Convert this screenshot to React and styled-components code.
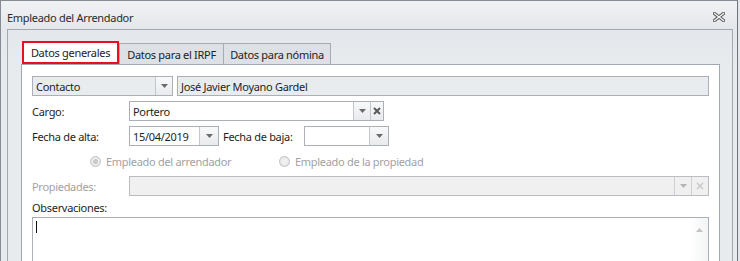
import React from 'react';
import styled, { createGlobalStyle } from 'styled-components';

const GlobalStyle = createGlobalStyle`
  html, body {
    margin: 0;
    padding: 0;
    overflow: hidden;
    background: #e3e6ea;
  }
  body {
    font-family: 'Noto Sans', 'Open Sans', sans-serif;
    font-size: 11px;
    letter-spacing: -0.3px;
    color: #1e1e1e;
  }
`;

const Window = styled.div`
  width: 738px;
  height: 320px;
  box-sizing: border-box;
  border: 1px solid #868c94;
  border-right-color: #6f757d;
  background: linear-gradient(#f1f2f4 0px, #e4e7eb 28px, #e8ebee 60px);
  display: flex;
  flex-direction: column;
`;

const TitleBar = styled.div`
  height: 28px;
  display: flex;
  align-items: center;
  justify-content: space-between;
  padding: 4px 12px 0 6px;
  box-sizing: border-box;
`;

const Title = styled.span`
  color: #2b2b2b;
`;

const GroupBox = styled.div`
  flex: 1;
  margin: 0 4px 0 6px;
  border: 1px solid #a2a8af;
  padding: 11px 12px 0 13px;
  display: flex;
  flex-direction: column;
`;

const TabStrip = styled.div`
  display: flex;
  align-items: flex-end;
  height: 23px;
  padding-left: 1px;
`;

const Tab = styled.div`
  box-sizing: border-box;
  height: ${({ active }) => (active ? '23px' : '21px')};
  width: ${({ w }) => w}px;
  display: flex;
  align-items: center;
  justify-content: center;
  background: ${({ active }) => (active ? '#ffffff' : '#dde0e4')};
  border: ${({ active }) => (active ? '2px solid #e8101a' : '1px solid #a5abb2')};
  border-bottom: ${({ active }) => (active ? '2px solid #e8101a' : 'none')};
  margin-left: ${({ active }) => (active ? '0' : '-1px')};
  padding-top: ${({ active }) => (active ? '0' : '1px')};
  color: #222;
  &:nth-child(2) {
    margin-left: 0;
  }
`;

const Panel = styled.div`
  flex: 1;
  background: #ffffff;
  border: 1px solid #a2a8af;
  border-bottom: none;
  padding: 11px 10px 0 10px;
  display: flex;
  flex-direction: column;
  gap: 5px;
`;

const Row = styled.div`
  display: flex;
  align-items: center;
  height: 20px;
  gap: ${({ gap }) => gap || 0}px;
`;

const Label = styled.div`
  width: ${({ w }) => w || 97}px;
  margin-left: ${({ ml }) => ml || 0}px;
  flex: none;
  color: ${({ disabled }) => (disabled ? '#a2a2a2' : '#1e1e1e')};
`;

const Field = styled.div`
  box-sizing: border-box;
  height: 20px;
  width: ${({ w }) => (w ? `${w}px` : 'auto')};
  flex: ${({ w }) => (w ? 'none' : '1')};
  display: flex;
  align-items: stretch;
  border: 1px solid ${({ disabled }) => (disabled ? '#b9bdc2' : '#abb0b6')};
  background: ${({ bg }) => bg || '#ffffff'};
`;

const Value = styled.div`
  flex: 1;
  display: flex;
  align-items: center;
  padding-left: ${({ pl }) => pl || 3}px;
  white-space: nowrap;
  overflow: hidden;
`;

const SideButton = styled.div`
  width: ${({ w }) => w || 16}px;
  flex: none;
  display: flex;
  align-items: center;
  justify-content: center;
  border-left: 1px solid ${({ disabled }) => (disabled ? '#cdd0d4' : '#c3c7cc')};
  background: ${({ disabled }) =>
    disabled ? '#f0f0f0' : 'linear-gradient(#f8f9fa, #e8eaed)'};
`;

const RadioRow = styled(Row)`
  padding-left: 58px;
`;

const RadioItem = styled.div`
  display: flex;
  align-items: center;
  gap: 5px;
  width: ${({ w }) => (w ? `${w}px` : 'auto')};
  color: #a2a2a2;
`;

const RadioDot = styled.span`
  box-sizing: border-box;
  width: 11px;
  height: 11px;
  border-radius: 50%;
  border: 1px solid #bfc2c6;
  background: radial-gradient(circle, #f4f4f4 0%, #e2e2e2 100%);
  display: flex;
  align-items: center;
  justify-content: center;
  &::after {
    content: '';
    width: 5px;
    height: 5px;
    border-radius: 50%;
    background: ${({ checked }) => (checked ? '#c9c9c9' : 'transparent')};
  }
`;

const TextLabel = styled.div`
  height: 14px;
  display: flex;
  align-items: center;
  margin-top: -1px;
`;

const Memo = styled.div`
  flex: 1;
  margin-top: -2px;
  border: 1px solid #abb0b6;
  border-bottom: none;
  display: flex;
  min-height: 60px;
`;

const MemoText = styled.div`
  flex: 1;
  padding: 3px 0 0 3px;
`;

const Caret = styled.div`
  width: 1px;
  height: 12px;
  background: #111;
`;

const ScrollBar = styled.div`
  width: 18px;
  background: linear-gradient(90deg, #ffffff, #f3f4f5);
  display: flex;
  justify-content: center;
  padding-top: 10px;
`;

const Arrow = ({ color = '#6b6b6b', up }) => (
  <svg width="7" height="4" viewBox="0 0 7 4">
    <path d={up ? 'M0 4 L3.5 0 L7 4 Z' : 'M0 0 L7 0 L3.5 4 Z'} fill={color} />
  </svg>
);

const ClearIcon = ({ color = '#5a5a5a', thin }) => (
  <svg width="8" height="8" viewBox="0 0 8 8">
    <path d="M1 1 L7 7 M7 1 L1 7" stroke={color} strokeWidth={thin ? 1.2 : 2} />
  </svg>
);

const CloseIcon = () => (
  <svg width="12" height="10" viewBox="0 0 12 10">
    <path d="M1.5 1.5 L10.5 8.5 M10.5 1.5 L1.5 8.5" stroke="#5c5c5c" strokeWidth="3.4" strokeLinecap="square" />
    <path d="M1.5 1.5 L10.5 8.5 M10.5 1.5 L1.5 8.5" stroke="#f4f5f6" strokeWidth="1.4" strokeLinecap="square" />
  </svg>
);

const App = () => (
  <>
    <GlobalStyle />
    <Window>
      <TitleBar>
        <Title>Empleado del Arrendador</Title>
        <CloseIcon />
      </TitleBar>
      <GroupBox>
        <TabStrip>
          <Tab active w={97}>Datos generales</Tab>
          <Tab w={105}>Datos para el IRPF</Tab>
          <Tab w={108}>Datos para nómina</Tab>
        </TabStrip>
        <Panel>
          <Row gap={4}>
            <Field w={141} bg="#e9ecef">
              <Value>Contacto</Value>
              <SideButton>
                <Arrow />
              </SideButton>
            </Field>
            <Field bg="#e9ecef">
              <Value>José Javier Moyano Gardel</Value>
            </Field>
          </Row>
          <Row>
            <Label>Cargo:</Label>
            <Field w={255}>
              <Value>Portero</Value>
              <SideButton>
                <Arrow />
              </SideButton>
              <SideButton w={12}>
                <ClearIcon />
              </SideButton>
            </Field>
          </Row>
          <Row>
            <Label>Fecha de alta:</Label>
            <Field w={90}>
              <Value>15/04/2019</Value>
              <SideButton w={18}>
                <Arrow />
              </SideButton>
            </Field>
            <Label w={81} ml={4}>Fecha de baja:</Label>
            <Field w={85}>
              <Value />
              <SideButton w={18}>
                <Arrow />
              </SideButton>
            </Field>
          </Row>
          <RadioRow>
            <RadioItem w={189}>
              <RadioDot checked />
              Empleado del arrendador
            </RadioItem>
            <RadioItem>
              <RadioDot />
              Empleado de la propiedad
            </RadioItem>
          </RadioRow>
          <Row>
            <Label disabled>Propiedades:</Label>
            <Field bg="#f0f0f0" disabled>
              <Value />
              <SideButton disabled>
                <Arrow color="#b5b5b5" />
              </SideButton>
              <SideButton disabled w={16}>
                <ClearIcon color="#c4c4c4" thin />
              </SideButton>
            </Field>
          </Row>
          <TextLabel>Observaciones:</TextLabel>
          <Memo>
            <MemoText>
              <Caret />
            </MemoText>
            <ScrollBar>
              <Arrow up color="#c2c2c2" />
            </ScrollBar>
          </Memo>
        </Panel>
      </GroupBox>
    </Window>
  </>
);

export default App;
